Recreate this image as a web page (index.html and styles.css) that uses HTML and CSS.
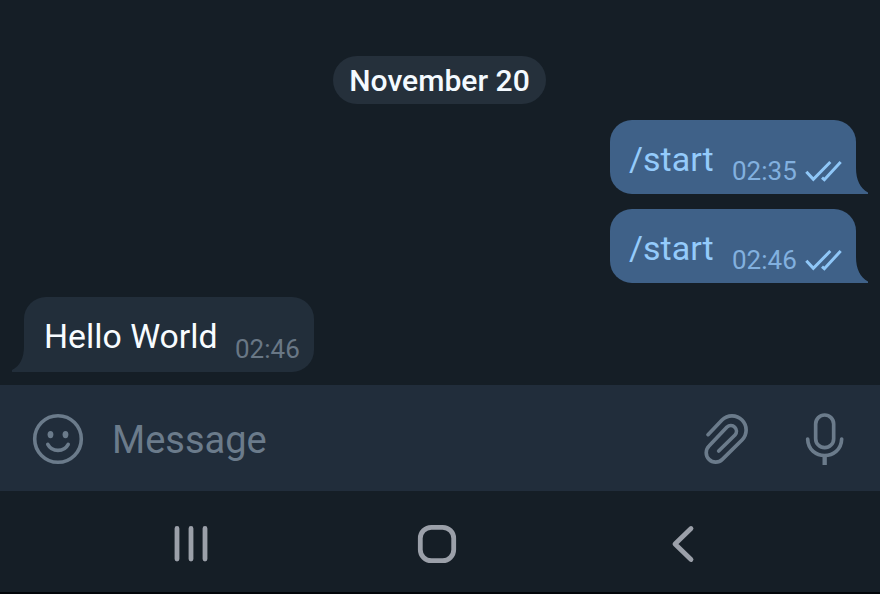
FILE: index.html
```html
<!DOCTYPE html>
<html lang="en">
<head>
<meta charset="utf-8">
<title>Chat</title>
<link rel="stylesheet" href="styles.css">
</head>
<body>
<div class="screen">
  <main class="chat">
    <div class="date">November 20</div>
    <div class="bubble out">
      <span class="text">/start</span>
      <span class="time">02:35</span>
      <svg class="checks" viewBox="612 148 114 66"><path d="M616 183L637 206L688 154M663 201L670 207L719 154"/></svg>
      <svg class="tail" viewBox="0 0 14 34"><path d="M0 0H1V8C1 20 5 28 13 32.500V34H0Z"/></svg>
    </div>
    <div class="bubble out">
      <span class="text">/start</span>
      <span class="time">02:46</span>
      <svg class="checks" viewBox="612 148 114 66"><path d="M616 183L637 206L688 154M663 201L670 207L719 154"/></svg>
      <svg class="tail" viewBox="0 0 14 34"><path d="M0 0H1V8C1 20 5 28 13 32.500V34H0Z"/></svg>
    </div>
    <div class="bubble in">
      <svg class="tail" viewBox="0 0 14 34"><path d="M14 0H13V8C13 20 9 28 1 32V34H14Z"/></svg>
      <span class="text">Hello World</span>
      <span class="time">02:46</span>
    </div>
  </main>
  <div class="composer">
    <svg class="smile" viewBox="0 0 52 52">
      <circle cx="26" cy="26" r="23.300"/>
      <path d="M15.800 31.400C20 39.400 32 39.400 36.200 31.400"/>
      <ellipse class="eye" cx="18.500" cy="21.600" rx="2.900" ry="3.700"/>
      <ellipse class="eye" cx="33.500" cy="21.600" rx="2.900" ry="3.700"/>
    </svg>
    <span class="placeholder">Message</span>
    <svg class="clip" viewBox="39 39 138 156"><path d="M54 104L96 60A42 42 0 0 1 156 120L97 178A28 28 0 0 1 57 138L111 81A17 17 0 0 1 135 105L86 153"/></svg>
    <svg class="mic" viewBox="342 33 126 168"><rect x="377" y="45" width="54" height="98" rx="27"/><path d="M353 117C355 183 453 183 455 117"/><path class="stem" d="M404 168V195"/></svg>
  </div>
  <nav class="nav">
    <svg class="recents" viewBox="0 0 36 38"><path d="M4 3.500V34M18 3.500V34M32 3.500V34"/></svg>
    <svg class="home" viewBox="0 0 40 40"><rect x="3.300" y="3.300" width="33.400" height="33.400" rx="11"/></svg>
    <svg class="back" viewBox="0 0 24 40"><path d="M20 4.500L4 20L20 35.500"/></svg>
  </nav>
</div>
</body>
</html>
```
FILE: styles.css
```css
* { box-sizing: border-box; }
body { margin: 0; background: #151e26; font-family: Roboto, sans-serif; }
.screen { width: 880px; height: 594px; display: flex; flex-direction: column; overflow: hidden; border-bottom: 2px solid #020509; }
.chat { height: 385px; padding: 56px 24px 0; display: flex; flex-direction: column; }
.date { flex: none; align-self: center; width: 213px; height: 48px; margin: 0 0 16px -1px; border-radius: 24px; background: #25303b; color: #f4faff; font-size: 30.100px; font-weight: 500; line-height: 49px; text-align: center; white-space: nowrap; }
.bubble { flex: none; position: relative; height: 74px; margin-bottom: 15px; border-radius: 22px; display: flex; align-items: flex-start; white-space: nowrap; }
.text { font-size: 34px; line-height: 40px; padding-top: 19px; }
.time { font-size: 26px; line-height: 30px; padding-top: 36px; }
.out { align-self: flex-end; width: 246px; padding-left: 19px; border-bottom-right-radius: 0; background: #3f6188; color: #94cbfb; }
.out .text { width: 103px; }
.out .time { width: 73px; color: #82b0df; }
.in { width: 290px; height: 75px; margin-top: -1px; padding-left: 20px; border-bottom-left-radius: 0; background: #222e3a; color: #f8fcff; }
.in .text { width: 191px; font-size: 33.800px; padding-top: 20px; }
.in .time { color: #697785; padding-top: 37px; }
.checks { width: 38px; height: 22px; margin-top: 40px; fill: none; stroke: #8fc7f8; stroke-width: 9; }
.tail { position: absolute; bottom: 0; width: 14px; height: 34px; }
.out .tail { right: -13px; fill: #3f6188; }
.in .tail { left: -13px; fill: #222e3a; }
.composer { height: 106px; padding: 2px 34px 0 32px; display: flex; align-items: center; background: #212d3b; }
.composer svg { fill: none; stroke: #6b7b8b; stroke-width: 3.600; stroke-linecap: round; stroke-linejoin: round; }
.smile { width: 52px; height: 52px; margin-right: 28px; }
.composer .eye { fill: #6b7b8b; stroke: none; }
.placeholder { flex: 1; color: #6b7b8b; font-size: 38px; line-height: 46px; padding-top: 1px; }
.composer .clip { width: 46px; height: 52px; margin-right: 55px; stroke-width: 11; }
.composer .mic { width: 42px; height: 56px; stroke-width: 11; }
.composer .stem { stroke-width: 13; stroke-linecap: butt; }
.nav { height: 101px; padding: 5px 185px 0 173px; display: flex; align-items: center; }
.nav svg { fill: none; stroke: #9ba0a9; stroke-width: 4.800; stroke-linecap: round; stroke-linejoin: round; }
.recents { width: 36px; height: 38px; }
.home { width: 40px; height: 40px; margin: 0 auto 0 208px; }
.back { width: 24px; height: 40px; }
```
